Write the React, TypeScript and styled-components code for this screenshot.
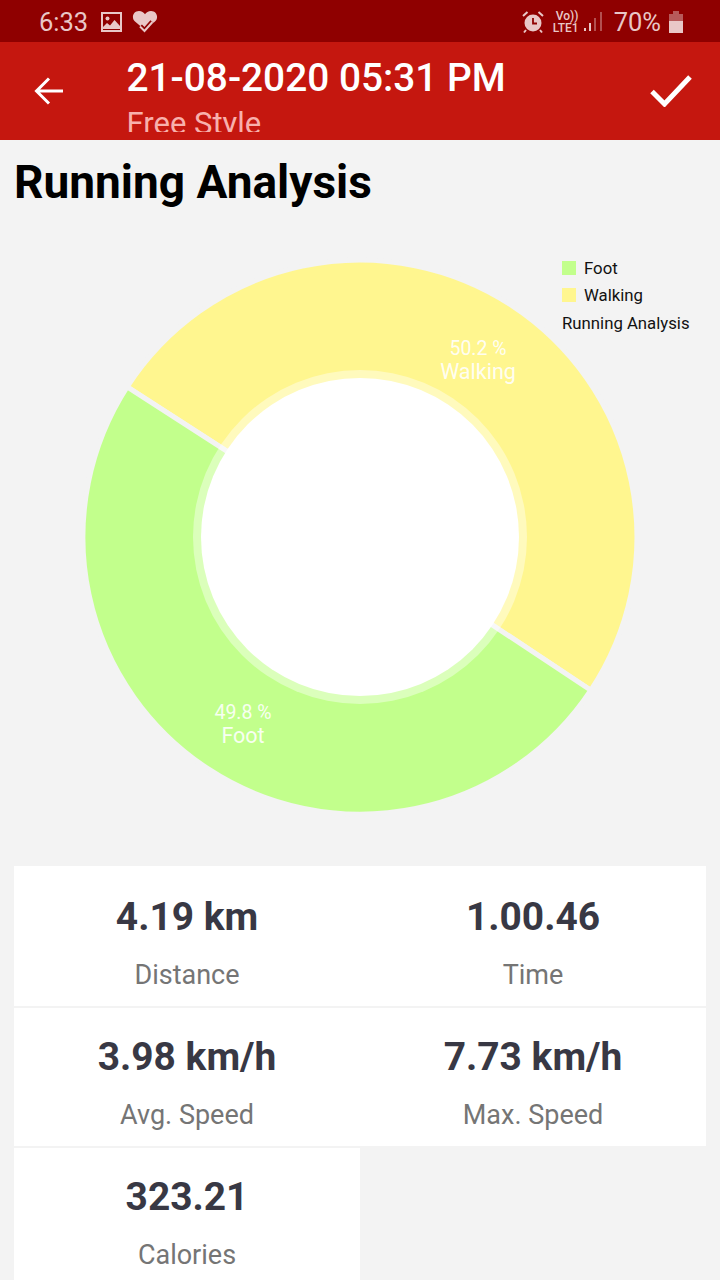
import React from 'react';
import styled, { createGlobalStyle } from 'styled-components';

const GlobalStyle = createGlobalStyle`
  html, body {
    margin: 0;
    padding: 0;
    background: #f3f3f3;
  }
  * {
    box-sizing: border-box;
  }
`;

const Page = styled.div`
  display: flex;
  flex-direction: column;
  width: 720px;
  height: 1280px;
  overflow: hidden;
  background: #f3f3f3;
  font-family: Roboto, 'Liberation Sans', sans-serif;
`;

const StatusBar = styled.div`
  display: flex;
  align-items: center;
  flex: none;
  height: 42px;
  padding: 2px 37px 0 39px;
  background: #8f0000;
  color: #e9c7c7;
`;

const StatusTime = styled.span`
  font-size: 25.5px;
  line-height: 40px;
  margin-right: 13px;
`;

const StatusIcon = styled.svg<{ $left?: number }>`
  display: block;
  flex: none;
  margin-left: ${({ $left }) => $left ?? 0}px;
`;

const Spacer = styled.div`
  flex: 1;
`;

const VolteLabel = styled.div`
  display: flex;
  flex-direction: column;
  align-items: flex-start;
  width: 25px;
  margin: 0 6px 0 8px;
  font-size: 12px;
  font-weight: 500;
  line-height: 12px;
`;

const VolteTop = styled.span`
  margin-left: 3px;
`;

const StatusPercent = styled.span`
  margin: 0 8px 0 12px;
  font-size: 25.5px;
  line-height: 40px;
`;

const Toolbar = styled.header`
  display: flex;
  align-items: flex-start;
  flex: none;
  height: 98px;
  background: #c5170f;
  color: #fff;
`;

const ToolbarButton = styled.div`
  display: flex;
  align-items: center;
  justify-content: center;
  flex: none;
  width: 98px;
  height: 98px;
`;

const ToolbarTitles = styled.div`
  flex: 1;
  height: 90px;
  margin-left: 28.5px;
  overflow: hidden;
`;

const ToolbarTitle = styled.div`
  margin-top: 13px;
  font-size: 38.8px;
  font-weight: 500;
  line-height: 46px;
`;

const ToolbarSubtitle = styled.div`
  margin-top: 3px;
  font-size: 31px;
  line-height: 40px;
  color: #f8b0ac;
`;

const Heading = styled.h1`
  margin: 18px 0 0 14px;
  font-size: 46px;
  font-weight: 700;
  line-height: 48px;
  color: #000;
`;

const ChartArea = styled.div`
  position: relative;
  flex: none;
  height: 660px;
`;

const ChartSvg = styled.svg`
  display: block;
`;

const SliceLabel = styled.text<{ $small?: boolean }>`
  fill: #fff;
  fill-opacity: 0.9;
  text-anchor: middle;
  font-size: ${({ $small }) => ($small ? 19.5 : 21.5)}px;
  font-family: Roboto, sans-serif;
`;

const Legend = styled.div`
  position: absolute;
  top: 48px;
  left: 562px;
  display: flex;
  flex-direction: column;
  color: #111;
  font-size: 16.75px;
`;

const LegendRow = styled.div`
  display: flex;
  align-items: center;
  height: 27.5px;
`;

const LegendSwatch = styled.span<{ $color: string }>`
  width: 14px;
  height: 14px;
  margin-right: 8px;
  background: ${({ $color }) => $color};
`;

const StatsGrid = styled.section`
  display: grid;
  grid-template-columns: 346px 346px;
  grid-template-rows: 140px 138px 140px;
  row-gap: 2px;
  margin: 0 14px;
`;

const StatCard = styled.div`
  display: flex;
  flex-direction: column;
  align-items: center;
  background: #fff;

  &:nth-child(-n + 2) {
    padding-top: 2px;
  }
`;

const StatValue = styled.div`
  margin-top: 26px;
  font-size: 38.9px;
  font-weight: 700;
  line-height: 46px;
  color: #383844;
`;

const StatLabel = styled.div`
  margin-top: 18px;
  font-size: 27px;
  line-height: 34px;
  color: #757575;
`;

const FOOT = '#c2ff8c';
const WALKING = '#fff68f';
const CX = 360;
const CY = 331;
const R = 277;

const polar = (deg: number, radius: number) => {
  const rad = (deg * Math.PI) / 180;
  return `${(CX + radius * Math.cos(rad)).toFixed(2)} ${(CY + radius * Math.sin(rad)).toFixed(2)}`;
};

const slice = (from: number, to: number, large: 0 | 1) =>
  `M${CX} ${CY} L${polar(from, R)} A${R} ${R} 0 ${large} 1 ${polar(to, R)} Z`;

const stats = [
  { value: '4.19 km', label: 'Distance' },
  { value: '1.00.46', label: 'Time' },
  { value: '3.98 km/h', label: 'Avg. Speed' },
  { value: '7.73 km/h', label: 'Max. Speed' },
  { value: '323.21', label: 'Calories' },
];

const App: React.FC = () => (
  <Page>
    <GlobalStyle />
    <StatusBar>
      <StatusTime>6:33</StatusTime>
      <StatusIcon width="21" height="20" viewBox="0 0 21 20">
        <rect x="1" y="1" width="19" height="18" fill="none" stroke="currentColor" strokeWidth="2" />
        <circle cx="6.5" cy="6.5" r="2" fill="currentColor" />
        <path fill="currentColor" d="M2 17v-2l4-4 3 2.5 4.5-5.5 5.5 6v3z" />
      </StatusIcon>
      <StatusIcon width="26" height="24" viewBox="0 0 26 24" $left={10}>
        <path
          fill="currentColor"
          d="M13 20 L3 11.5 C-1 8 1 1 7 1 C9.6 1 11.8 2.3 13 4.3 C14.2 2.3 16.4 1 19 1 C25 1 27 8 23 11.5 Z"
        />
        <path d="M8 16.5l4.5 4.5 8-9" fill="none" stroke="#8f0000" strokeWidth="5.5" />
        <path d="M8 16.5l4.5 4.5 8-9" fill="none" stroke="currentColor" strokeWidth="2" />
      </StatusIcon>
      <Spacer />
      <StatusIcon width="24" height="24" viewBox="0 0 24 24">
        <circle cx="12" cy="13" r="8.5" fill="currentColor" />
        <path d="M12 8v5.5h4" fill="none" stroke="#8f0000" strokeWidth="1.8" />
        <path
          d="M2 6l4.5-4 M22 6l-4.5-4 M5 20l-2 2.5 M19 20l2 2.5"
          stroke="currentColor"
          strokeWidth="2"
          fill="none"
        />
      </StatusIcon>
      <VolteLabel>
        <VolteTop>Vo))</VolteTop>
        <span>LTE1</span>
      </VolteLabel>
      <StatusIcon width="18" height="22" viewBox="0 0 18 22">
        <rect x="0" y="17" width="2" height="3" fill="currentColor" />
        <rect x="5" y="12" width="2" height="8" fill="currentColor" />
        <rect x="10" y="7" width="2" height="13" fill="currentColor" opacity="0.4" />
        <rect x="16" y="1" width="2" height="19" fill="currentColor" opacity="0.4" />
      </StatusIcon>
      <StatusPercent>70%</StatusPercent>
      <StatusIcon width="14" height="22" viewBox="0 0 14 22">
        <path d="M4 0h6v3h4v7H0V3h4z" fill="currentColor" opacity="0.45" />
        <rect x="0" y="10" width="14" height="12" fill="currentColor" />
      </StatusIcon>
    </StatusBar>

    <Toolbar>
      <ToolbarButton>
        <svg width="30" height="28" viewBox="0 0 30 28" fill="none" stroke="#fff" strokeWidth="3">
          <path d="M29 14H3 M15 1.5L2.5 14 15 26.5" />
        </svg>
      </ToolbarButton>
      <ToolbarTitles>
        <ToolbarTitle>21-08-2020 05:31 PM</ToolbarTitle>
        <ToolbarSubtitle>Free Style</ToolbarSubtitle>
      </ToolbarTitles>
      <ToolbarButton>
        <svg width="42" height="32" viewBox="0 0 42 32" fill="none" stroke="#fff" strokeWidth="5">
          <path d="M2 16.5L14.5 29 40 2" />
        </svg>
      </ToolbarButton>
    </Toolbar>

    <Heading>Running Analysis</Heading>

    <ChartArea>
      <ChartSvg width="720" height="660" viewBox="0 0 720 660">
        <path d={slice(212.8, 33.6, 1)} fill={WALKING} stroke="#f3f3f3" strokeWidth="5" />
        <path d={slice(33.6, 212.8, 0)} fill={FOOT} stroke="#f3f3f3" strokeWidth="5" />
        <circle cx={CX} cy={CY} r="167" fill="#fff" fillOpacity="0.41" />
        <circle cx={CX} cy={CY} r="159" fill="#fff" />
        <SliceLabel x="478" y="149" $small>50.2 %</SliceLabel>
        <SliceLabel x="478" y="173">Walking</SliceLabel>
        <SliceLabel x="243" y="513" $small>49.8 %</SliceLabel>
        <SliceLabel x="243" y="537">Foot</SliceLabel>
      </ChartSvg>
      <Legend>
        <LegendRow>
          <LegendSwatch $color={FOOT} />
          Foot
        </LegendRow>
        <LegendRow>
          <LegendSwatch $color={WALKING} />
          Walking
        </LegendRow>
        <LegendRow>Running Analysis</LegendRow>
      </Legend>
    </ChartArea>

    <StatsGrid>
      {stats.map((stat) => (
        <StatCard key={stat.label}>
          <StatValue>{stat.value}</StatValue>
          <StatLabel>{stat.label}</StatLabel>
        </StatCard>
      ))}
    </StatsGrid>
  </Page>
);

export default App;
